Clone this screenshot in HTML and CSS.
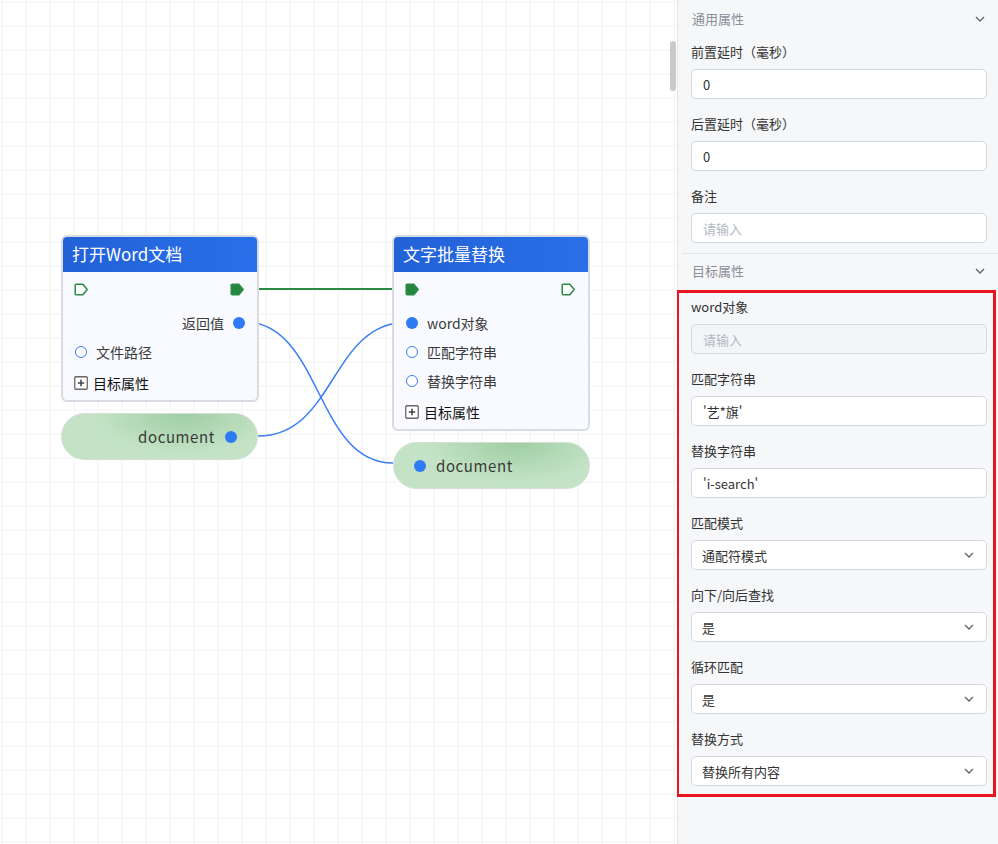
FILE: index.html
```html
<!DOCTYPE html>
<html lang="zh-CN">
<head>
    <meta charset="UTF-8">
    <title>流程编辑器</title>
    <link rel="stylesheet" href="styles.css">
</head>
<body>
<div class="canvas">
    <svg class="edges" width="677" height="844" viewBox="0 0 677 844">
        <path class="flow" d="M245 289 H406"/>
        <path class="data" d="M244 322 C322 322 315 463 393 463"/>
        <path class="data" d="M258 436 C336 436 330 322 408 322"/>
    </svg>

    <div class="node node-open">
        <div class="node-title">打开Word文档</div>
        <div class="node-body">
            <div class="ctl-row">
                <svg class="ctl" width="15" height="13" viewBox="0 0 15 13"><path d="M2.2 1.2h6.6l4.4 5.3-4.4 5.3H2.2a1 1 0 0 1-1-1V2.2a1 1 0 0 1 1-1z"/></svg>
                <svg class="ctl on" width="15" height="13" viewBox="0 0 15 13"><path d="M2.2 1.2h6.6l4.4 5.3-4.4 5.3H2.2a1 1 0 0 1-1-1V2.2a1 1 0 0 1 1-1z"/></svg>
            </div>
            <div class="row out">返回值<span class="pin on"></span></div>
            <div class="row"><span class="pin"></span>文件路径</div>
            <div class="more">
                <svg width="14" height="14" viewBox="0 0 14 14"><rect x="0.75" y="0.75" width="12.5" height="12.5" rx="1"/><path d="M7 3.8v6.4M3.8 7h6.4"/></svg>
                目标属性
            </div>
        </div>
    </div>

    <div class="pill pill-left">document<span class="pin on"></span></div>

    <div class="node node-replace">
        <div class="node-title">文字批量替换</div>
        <div class="node-body">
            <div class="ctl-row">
                <svg class="ctl on" width="15" height="13" viewBox="0 0 15 13"><path d="M2.2 1.2h6.6l4.4 5.3-4.4 5.3H2.2a1 1 0 0 1-1-1V2.2a1 1 0 0 1 1-1z"/></svg>
                <svg class="ctl" width="15" height="13" viewBox="0 0 15 13"><path d="M2.2 1.2h6.6l4.4 5.3-4.4 5.3H2.2a1 1 0 0 1-1-1V2.2a1 1 0 0 1 1-1z"/></svg>
            </div>
            <div class="row"><span class="pin on"></span>word对象</div>
            <div class="row"><span class="pin"></span>匹配字符串</div>
            <div class="row"><span class="pin"></span>替换字符串</div>
            <div class="more">
                <svg width="14" height="14" viewBox="0 0 14 14"><rect x="0.75" y="0.75" width="12.5" height="12.5" rx="1"/><path d="M7 3.8v6.4M3.8 7h6.4"/></svg>
                目标属性
            </div>
        </div>
    </div>

    <div class="pill pill-right"><span class="pin on"></span>document</div>

    <div class="scroll-thumb"></div>
</div>

<div class="panel">
    <div class="section-head">通用属性
        <svg class="chev" width="10" height="6" viewBox="0 0 10 6"><path d="M1 1l4 4 4-4"/></svg>
    </div>
    <div class="fields general">
        <div class="field">
            <div class="label">前置延时（毫秒）</div>
            <input class="input" value="0">
        </div>
        <div class="field">
            <div class="label">后置延时（毫秒）</div>
            <input class="input" value="0">
        </div>
        <div class="field">
            <div class="label">备注</div>
            <input class="input" placeholder="请输入">
        </div>
    </div>
    <div class="divider"></div>
    <div class="section-head">目标属性
        <svg class="chev" width="10" height="6" viewBox="0 0 10 6"><path d="M1 1l4 4 4-4"/></svg>
    </div>
    <div class="fields highlight">
        <div class="field">
            <div class="label">word对象</div>
            <input class="input" placeholder="请输入" disabled>
        </div>
        <div class="field">
            <div class="label">匹配字符串</div>
            <input class="input" value="'艺*旗'">
        </div>
        <div class="field">
            <div class="label">替换字符串</div>
            <input class="input" value="'i-search'">
        </div>
        <div class="field">
            <div class="label">匹配模式</div>
            <div class="select">通配符模式<svg class="chev" width="10" height="6" viewBox="0 0 10 6"><path d="M1 1l4 4 4-4"/></svg></div>
        </div>
        <div class="field">
            <div class="label">向下/向后查找</div>
            <div class="select">是<svg class="chev" width="10" height="6" viewBox="0 0 10 6"><path d="M1 1l4 4 4-4"/></svg></div>
        </div>
        <div class="field">
            <div class="label">循环匹配</div>
            <div class="select">是<svg class="chev" width="10" height="6" viewBox="0 0 10 6"><path d="M1 1l4 4 4-4"/></svg></div>
        </div>
        <div class="field">
            <div class="label">替换方式</div>
            <div class="select">替换所有内容<svg class="chev" width="10" height="6" viewBox="0 0 10 6"><path d="M1 1l4 4 4-4"/></svg></div>
        </div>
    </div>
</div>
</body>
</html>
```

FILE: styles.css
```css
* {
    box-sizing: border-box;
}

body {
    margin: 0;
    display: flex;
    height: 844px;
    overflow: hidden;
    font-family: "Noto Sans CJK SC", "Noto Sans", sans-serif;
    color: #333;
    background-color: #fff;
}

/* canvas */

.canvas {
    position: relative;
    flex: 0 0 677px;
    height: 100%;
    overflow: hidden;
    background-color: #fff;
    background-image:
        linear-gradient(to right, #f8f8f8 2px, transparent 2px),
        linear-gradient(to bottom, #f8f8f8 2px, transparent 2px);
    background-size: 24px 24px;
    background-position: 1px 1px;
}

.edges {
    position: absolute;
    left: 0;
    top: 0;
}

.edges path {
    fill: none;
}

.edges .flow {
    stroke: #2b8a43;
    stroke-width: 2;
}

.edges .data {
    stroke: #3a7df5;
    stroke-width: 1.5;
}

.node {
    position: absolute;
    width: 198px;
    border: 2px solid #d8dbe2;
    border-radius: 6px;
    background-color: #f8faff;
    overflow: hidden;
}

.node-open {
    left: 61px;
    top: 235px;
}

.node-replace {
    left: 392px;
    top: 235px;
}

.node-title {
    height: 35px;
    padding-left: 9px;
    line-height: 34px;
    font-size: 17px;
    color: #fff;
    background: linear-gradient(90deg, #2261d6, #2a6fe9);
}

.node-body {
    padding: 4px 0 3px;
}

.ctl-row {
    display: flex;
    justify-content: space-between;
    align-items: center;
    height: 26px;
    margin-bottom: 6px;
    padding: 0 12px 0 11px;
}

.ctl path {
    fill: #fff;
    stroke: #2b8a43;
    stroke-width: 1.5;
    stroke-linejoin: round;
}

.ctl.on path {
    fill: #25873f;
}

.row {
    display: flex;
    align-items: center;
    gap: 9px;
    height: 29px;
    padding: 0 12px;
    font-size: 14px;
    color: #3a3a3a;
}

.row.out {
    justify-content: flex-end;
}

.pin {
    flex: none;
    width: 12px;
    height: 12px;
    border: 1.5px solid #3a7df5;
    border-radius: 50%;
    background-color: #fff;
}

.pin.on {
    border: none;
    background-color: #2f7bf6;
}

.more {
    display: flex;
    align-items: center;
    gap: 5px;
    height: 28px;
    margin-top: 3px;
    padding: 0 11px;
    font-size: 14px;
    color: #111;
}

.more rect {
    fill: #fff;
    stroke: #666;
    stroke-width: 1.3;
}

.more path {
    stroke: #444;
    stroke-width: 1.6;
}

.pill {
    position: absolute;
    display: flex;
    align-items: center;
    gap: 10px;
    width: 197px;
    height: 47px;
    border: 1px solid #d3dfd4;
    border-radius: 24px;
    font-size: 15px;
    letter-spacing: 0.6px;
    color: #3a3a3a;
    background: radial-gradient(ellipse 90px 40px at 62% 0%, #9fcea3, #c4e3c6 100%);
}

.pill-left {
    left: 61px;
    top: 413px;
    justify-content: flex-end;
    padding-right: 20px;
}

.pill-right {
    left: 393px;
    top: 442px;
    padding-left: 20px;
}

.scroll-thumb {
    position: absolute;
    right: 1px;
    top: 41px;
    width: 6px;
    height: 50px;
    border-radius: 3px;
    background-color: #c9c9c9;
}

/* panel */

.panel {
    flex: 1;
    height: 100%;
    padding-top: 2px;
    border-left: 1px solid #e3e5ea;
    background-color: #f6f7f9;
}

.section-head {
    display: flex;
    justify-content: space-between;
    align-items: center;
    height: 36px;
    padding: 0 13px 3px 14px;
    font-size: 13px;
    color: #8a8e97;
}

.chev path {
    fill: none;
    stroke: #666;
    stroke-width: 1.4;
}

.fields {
    padding: 6px 11px 10px 13px;
}

.field {
    margin-bottom: 17px;
}

.field:last-child {
    margin-bottom: 0;
}

.label {
    height: 18px;
    margin-bottom: 7px;
    line-height: 16px;
    font-size: 13px;
    color: #333;
}

.input,
.select {
    display: flex;
    align-items: center;
    justify-content: space-between;
    width: 100%;
    height: 30px;
    padding: 0 11px;
    border: 1px solid #d5d8df;
    border-radius: 5px;
    background-color: #fff;
    font-family: inherit;
    font-size: 13px;
    color: #333;
    outline: none;
}

.input::placeholder {
    color: #b3b7bf;
}

.input:disabled {
    background-color: #f4f5f8;
}

.select {
    padding: 0 12px 0 10px;
}

.divider {
    height: 1px;
    margin-left: 4px;
    background-color: #e4e6ea;
}

.highlight {
    margin: 0 2px 0 -2px;
    padding: 6px 6px 8px 12px;
    border: 3px solid #e8141e;
}
```
